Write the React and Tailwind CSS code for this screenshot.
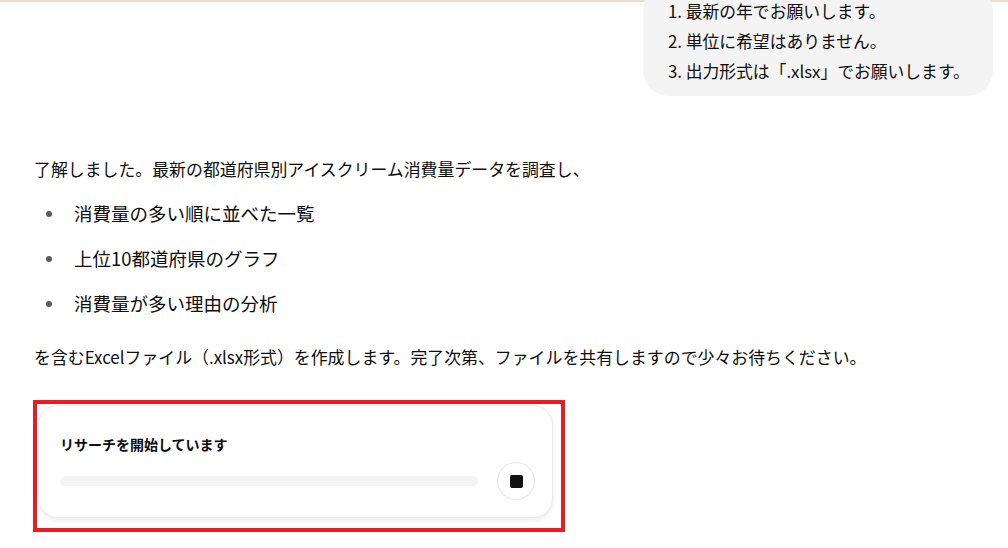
import React from 'react';

const bullets = ['消費量の多い順に並べた一覧', '上位10都道府県のグラフ', '消費量が多い理由の分析'];

export default function App() {
  return (
    <div className="relative w-[1008px] h-[548px] overflow-hidden bg-white text-[#0d0d0d] font-['Noto_Sans_CJK_JP',sans-serif]">
      {/* top edge */}
      <div className="h-[2px] bg-[#ebe1cd]" />

      {/* user message */}
      <div className="flex justify-end pr-[15px]">
        <div className="-mt-[18px] w-[350px] rounded-[26px] bg-[#f4f4f4] pl-[25px] pt-[12px] pb-[10px] text-[16.8px] leading-[30px]">
          <div>1. 最新の年でお願いします。</div>
          <div>2. 単位に希望はありません。</div>
          <div>3. 出力形式は「.xlsx」でお願いします。</div>
        </div>
      </div>

      {/* assistant reply */}
      <div className="pl-[34px] mt-[50px]">
        <p className="text-[16.9px] leading-[45px]">了解しました。最新の都道府県別アイスクリーム消費量データを調査し、</p>
        <ul>
          {bullets.map(b => (
            <li key={b} className="flex items-center h-[45px]">
              <span className="ml-[12px] w-[6px] h-[6px] rounded-full bg-[#5c5c5c]" />
              <span className="ml-[22px] text-[18.5px]">{b}</span>
            </li>
          ))}
        </ul>
        <p className="mt-[17px] text-[16.9px] leading-[28px]">
          を含むExcelファイル（.xlsx形式）を作成します。完了次第、ファイルを共有しますので少々お待ちください。
        </p>

        {/* highlighted research card */}
        <div className="mt-[29px] -ml-px w-[532px] h-[132px] border-4 border-[#e81c27]">
          <div className="ml-px mt-px w-[515px] h-[113px] rounded-[20px] border border-[#ececec] bg-white shadow-[0_2px_5px_rgba(0,0,0,0.09)] pl-[21px] pr-[17px] pt-[28px]">
            <div className="text-[14px] leading-[20px] font-bold">リサーチを開始しています</div>
            <div className="mt-[8px] flex items-center">
              <div className="h-[10px] w-[418px] rounded-full bg-[#f4f4f4]" />
              <button className="ml-[19px] flex h-[38px] w-[38px] items-center justify-center rounded-full border border-[#e3e3e3] bg-white">
                <span className="block h-[13px] w-[13px] rounded-[2px] bg-[#111]" />
              </button>
            </div>
          </div>
        </div>
      </div>
    </div>
  );
}
